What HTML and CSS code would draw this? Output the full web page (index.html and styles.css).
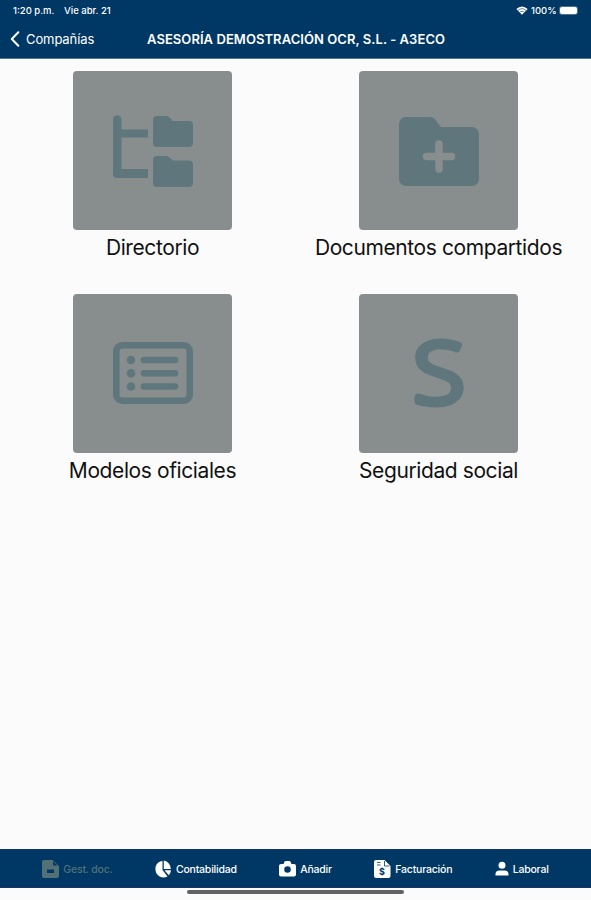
FILE: index.html
```html
<!DOCTYPE html>
<html lang="es">
<head>
    <meta charset="UTF-8">
    <meta name="viewport" content="width=device-width, initial-scale=1.0">
    <title>Asesoría - Gestión documental</title>
    <link rel="stylesheet" href="styles.css">
</head>
<body>
    <header class="header">
        <div class="status-bar">
            <span class="clock">1:20 p.m.</span>
            <span class="date">Vie abr. 21</span>
            <svg class="wifi" viewBox="0 0 12 9">
                <path d="M0.3 3.1Q6-2.1 11.7 3.1L6 8.8Z" fill="#fff"/>
                <path d="M1.9 4.4Q6 0.9 10.1 4.4M3.6 6.1Q6 4.2 8.4 6.1" fill="none" stroke="#003865" stroke-width="0.6"/>
            </svg>
            <span class="percent">100%</span>
            <span class="battery"></span>
        </div>
        <div class="nav-bar">
            <a class="back">
                <svg class="chevron" viewBox="0 0 10 16"><path d="M8.3 1.3L1.8 8l6.5 6.7" fill="none" stroke="#fff" stroke-width="2" stroke-linecap="round" stroke-linejoin="round"/></svg>
                <span>Compañías</span>
            </a>
            <h1>ASESORÍA DEMOSTRACIÓN OCR, S.L. - A3ECO</h1>
        </div>
    </header>

    <main class="grid">
        <div class="item">
            <div class="tile">
                <svg class="icon" viewBox="0 0 80 80">
                    <path d="M0 8.5a4 4 0 0 1 8.500 0V18.500H35v8H8.500V58H35v9H4a4 4 0 0 1-4-4z"/>
                    <path d="M44 5h9q2 0 3.200 1.300L60 10h16a4 4 0 0 1 4 4v18a4 4 0 0 1-4 4H44a4 4 0 0 1-4-4V9a4 4 0 0 1 4-4z"/>
                    <path d="M44 45h9q2 0 3.200 1.300L60 49.500h16a4 4 0 0 1 4 4V72a4 4 0 0 1-4 4H44a4 4 0 0 1-4-4V49a4 4 0 0 1 4-4z"/>
                </svg>
            </div>
            <p class="label">Directorio</p>
        </div>
        <div class="item">
            <div class="tile">
                <svg class="icon" viewBox="0 0 80 80">
                    <path d="M7 6h24q3 0 5 2.200L42 16h31a7 7 0 0 1 7 7v45a7 7 0 0 1-7 7H7a7 7 0 0 1-7-7V13a7 7 0 0 1 7-7z"/>
                    <path class="cross" d="M40 33v25M27.500 45.500h25"/>
                </svg>
            </div>
            <p class="label">Documentos compartidos</p>
        </div>
        <div class="item">
            <div class="tile">
                <svg class="icon" viewBox="0 0 80 80">
                    <rect class="line" x="3.3" y="12.3" width="73.4" height="55.4" rx="6"/>
                    <path class="line" d="M31 27h31M31 40.200h31M31 53.500h31"/>
                    <circle cx="18" cy="27" r="4.3"/>
                    <circle cx="18" cy="40.2" r="4.3"/>
                    <circle cx="18" cy="53.5" r="4.3"/>
                </svg>
            </div>
            <p class="label">Modelos oficiales</p>
        </div>
        <div class="item">
            <div class="tile">
                <svg class="icon" viewBox="0 0 80 80">
                    <text class="letter" x="40" y="69.5" transform="translate(-5) scale(1.12 1)" text-anchor="middle">S</text>
                </svg>
            </div>
            <p class="label">Seguridad social</p>
        </div>
    </main>

    <nav class="tabs">
        <a class="tab tab-docs disabled">
            <svg viewBox="0 0 17 18"><path fill-rule="evenodd" d="M2 0h8.500L17 6v10a2 2 0 0 1-2 2H2a2 2 0 0 1-2-2V2a2 2 0 0 1 2-2zM11 1.500V5.500H15.500zM5 9.500v3.500h7V9.500z"/></svg>
            <span>Gest. doc.</span>
        </a>
        <a class="tab tab-accounts">
            <svg viewBox="0 0 17 18"><path d="M7.500 1v9l5 6.500A8 8 0 0 1 0.500 10C0 5 3 1.500 7.500 1z"/><path d="M8.800 0.500q6.500 1.500 7 8.500H8.800zM9.500 10.300h6.500q-0.300 3-2.200 5z"/></svg>
            <span>Contabilidad</span>
        </a>
        <a class="tab tab-add">
            <svg viewBox="0 0 17 18"><path fill-rule="evenodd" d="M2 4h2.500l1-2.200q0.300-.8 1.200-.8h3.600q.9 0 1.200.8l1 2.200H15a2 2 0 0 1 2 2v8.500a2 2 0 0 1-2 2H2a2 2 0 0 1-2-2V6a2 2 0 0 1 2-2zM8.500 6.200a3.300 3.300 0 1 0 0 6.600 3.300 3.300 0 0 0 0-6.600z"/></svg>
            <span>Añadir</span>
        </a>
        <a class="tab tab-invoices">
            <svg viewBox="0 0 17 18"><path d="M2 0h8.500L16.500 6v10a2 2 0 0 1-2 2H2a2 2 0 0 1-2-2V2a2 2 0 0 1 2-2z"/><path d="M3 2.500h3.500M3 5h3.500M10.500 1v5h5" fill="none" stroke="#003865" stroke-width="0.8"/><text class="dollar" x="5" y="14.8">$</text></svg>
            <span>Facturación</span>
        </a>
        <a class="tab tab-work">
            <svg viewBox="0 0 14 18"><circle cx="7" cy="5.2" r="3.5"/><path d="M0.500 15.500v-1.700Q1 10.500 4.500 10.500h5q3.500 0 4 3.300v1.700z"/></svg>
            <span>Laboral</span>
        </a>
    </nav>
    <div class="home-area"><div class="home-indicator"></div></div>
</body>
</html>
```
FILE: styles.css
```css
* {
    box-sizing: border-box;
}

body {
    display: flex;
    flex-direction: column;
    height: 900px;
    margin: 0;
    font-family: Inter, 'Liberation Sans', sans-serif;
    background: #fbfbfb;
    color: #111;
}

/* Header */
.header {
    height: 59px;
    background: #003865;
    border-bottom: 1px solid #53749b;
    color: #fff;
}

.status-bar {
    display: flex;
    align-items: center;
    height: 20px;
    padding: 0 14px 0 13px;
    font-size: 9.5px;
    font-weight: 500;
    white-space: nowrap;
}

.clock {
    width: 51px;
}

.wifi {
    width: 12px;
    height: 9px;
    margin-left: auto;
}

.percent {
    margin-left: 3px;
    width: 26px;
}

.battery {
    width: 17px;
    height: 7px;
    margin-left: 3px;
    border-radius: 2px;
    background: #fff;
    box-shadow: 0 0 0 1px #49708f;
}

.nav-bar {
    display: grid;
    grid-template-columns: 147px 299px 1fr;
    align-items: center;
    height: 38px;
}

.back {
    display: flex;
    align-items: center;
    padding-left: 10px;
    font-size: 13px;
    letter-spacing: -0.1px;
}

.chevron {
    width: 10px;
    height: 16px;
    margin-right: 6px;
}

h1 {
    margin: 0;
    font-size: 13px;
    font-weight: 600;
    letter-spacing: 0.06px;
    white-space: nowrap;
}

/* Options */
.grid {
    flex: 1;
    display: grid;
    grid-template-columns: 286px 286px;
    grid-auto-rows: 222.5px;
    justify-content: center;
    padding-top: 12px;
}

.item {
    display: flex;
    flex-direction: column;
    align-items: center;
}

.tile {
    display: flex;
    align-items: center;
    justify-content: center;
    width: 159px;
    height: 159px;
    border-radius: 4px;
    background: #888d8d;
}

.icon {
    width: 80px;
    height: 80px;
    overflow: visible;
    fill: #5f777c;
}

.icon .line {
    fill: none;
    stroke: #5f777c;
    stroke-width: 6.6;
    stroke-linecap: round;
}

.icon .cross {
    fill: none;
    stroke: #888d8d;
    stroke-width: 7.5;
    stroke-linecap: round;
}

.letter {
    font-family: 'Open Sans', 'Noto Sans', sans-serif;
    font-size: 84px;
    font-weight: 300;
    stroke: #5f777c;
    stroke-width: 7;
    stroke-linejoin: round;
}

.label {
    margin: 4px 0 0;
    font-size: 21px;
    font-weight: 400;
    letter-spacing: -0.4px;
    line-height: 28px;
    white-space: nowrap;
}

/* Bottom tabs */
.tabs {
    display: flex;
    align-items: center;
    justify-content: space-evenly;
    height: 39px;
    padding-top: 1px;
    background: #003865;
    border-top: 1px solid #123467;
    border-bottom: 1px solid #123467;
}

.tab {
    display: flex;
    align-items: center;
    gap: 4px;
    color: #fff;
    font-size: 10.5px;
    font-weight: 500;
    letter-spacing: -0.2px;
    white-space: nowrap;
}

.tab svg {
    width: 17px;
    height: 18px;
    fill: currentColor;
}

.tab.disabled {
    color: #527176;
}

.tab-work svg {
    width: 14px;
}

.dollar {
    fill: #003865;
    font-size: 9px;
    font-weight: 700;
}

.home-area {
    height: 12px;
    padding-top: 2px;
}

.home-indicator {
    width: 217px;
    height: 4px;
    margin: 0 auto;
    border-radius: 2px;
    background: #626262;
}
```
